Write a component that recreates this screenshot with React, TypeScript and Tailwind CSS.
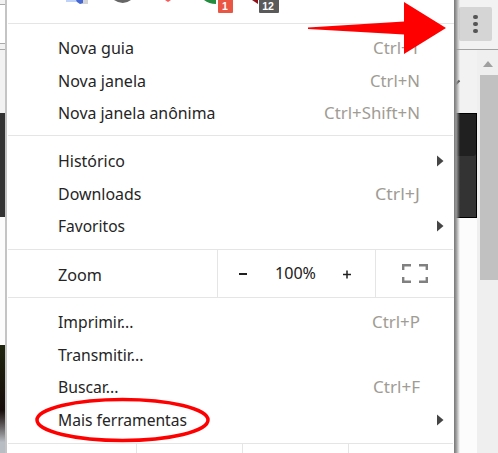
import React from "react";

type Item = { label: string; width: number; keys?: string; keysWidth?: number; sub?: boolean };

const windows: Item[] = [
  { label: "Nova guia", width: 76, keys: "Ctrl+T", keysWidth: 47 },
  { label: "Nova janela", width: 88, keys: "Ctrl+N", keysWidth: 50 },
  { label: "Nova janela anônima", width: 157.5, keys: "Ctrl+Shift+N", keysWidth: 96 },
];
const library: Item[] = [
  { label: "Histórico", width: 67, sub: true },
  { label: "Downloads", width: 83.5, keys: "Ctrl+J", keysWidth: 45 },
  { label: "Favoritos", width: 67, sub: true },
];
const tools: Item[] = [
  { label: "Imprimir...", width: 75.5, keys: "Ctrl+P", keysWidth: 48 },
  { label: "Transmitir...", width: 85.5 },
  { label: "Buscar...", width: 60.5, keys: "Ctrl+F", keysWidth: 47 },
  { label: "Mais ferramentas", width: 129, sub: true },
];

function Label({ text, width, className }: { text: string; width: number; className: string }) {
  return (
    <svg width={width} height="22" className="block overflow-visible">
      <text x="0" y="16.75" textLength={width} lengthAdjust="spacingAndGlyphs" className={className}>
        {text}
      </text>
    </svg>
  );
}

function Row({ item }: { item: Item }) {
  return (
    <div className="flex h-[32.5px] items-center justify-between pl-[51px] pr-[10px]">
      <Label text={item.label} width={item.width} className="fill-[#252525]" />
      {item.keys && (
        <div className="pr-[24px]">
          <Label text={item.keys} width={item.keysWidth ?? 48} className="fill-[#a09c94]" />
        </div>
      )}
      {item.sub && (
        <svg width="7" height="12" className="block">
          <path d="M0 .5 6.5 6 0 11.5Z" fill="#454545" />
        </svg>
      )}
    </div>
  );
}

function Group({ items, className }: { items: Item[]; className: string }) {
  return (
    <div className={`ml-px mr-[2px] border-b border-[#e5e5e5] ${className}`}>
      <div className="-ml-px -mr-px">
        {items.map((item) => (
          <Row key={item.label} item={item} />
        ))}
      </div>
    </div>
  );
}

export default function App() {
  return (
    <div className="relative flex h-[453px] w-[498px] overflow-hidden bg-[#fcfcfc] font-['Noto_Sans','Open_Sans',sans-serif] text-[16px]">
      <div className="flex w-[5px] shrink-0 flex-col">
        <div className="h-[4px] bg-[#f2f2f2]" />
        <div className="h-[40px] border-y border-[#aaa] bg-white" />
        <div className="h-[5px] bg-[#f2f2f2]" />
        <div className="h-[64px] border-t border-[#aaa] bg-[#f2f2f2]" />
        <div className="h-[104px] bg-[#333]" />
        <div className="h-[128px] bg-[#fcfcfc]" />
        <div className="h-[108px] bg-linear-to-b from-[#20260f] via-[#160c0a] via-60% to-[#b8bdc3] to-90%" />
      </div>

      <div className="flex w-[450px] shrink-0 flex-col border-l-2 border-[#c4c4c4] bg-white">
        <div className="mx-px h-[24px] border-b border-[#e5e5e5]">
          <svg width="445" height="23" viewBox="8 0 445 23" className="block">
            <path d="M66 0h13v2H66Z" fill="#bfd2fa" />
            <path d="M77 0h11v4H80Z" fill="#d4d4d6" />
            <path d="M76 0h7v3l-3 1-3-2Z" fill="#4568d2" />
            <path d="M114 0q9 6 17 0Z" fill="#666" />
            <path d="M165 0h6l-3 2Z" fill="#ff5555" />
            <path d="M204 0q5 4 12 4V0Z" fill="#238c3e" />
            <path d="M252 0h6v4Z" fill="#8d1118" />
            <rect x="218" y="-2" width="15" height="15" rx="1" fill="#ea5644" />
            <rect x="259" y="-2" width="20" height="15" rx="1" fill="#5a5a5a" />
            <text x="225" y="10" textAnchor="middle" className="fill-white font-['Liberation_Sans',sans-serif] text-[10.5px] font-bold">1</text>
            <text x="268" y="10" textAnchor="middle" className="fill-white font-['Liberation_Sans',sans-serif] text-[10.5px] font-bold">12</text>
          </svg>
        </div>
        <Group items={windows} className="h-[112px] pt-[8px]" />
        <Group items={library} className="h-[114px] pt-[9px]" />
        <div className="mx-px flex h-[48px] border-b border-[#e5e5e5]">
          <div className="flex w-[210px] items-center border-r border-[#e5e5e5] pl-[50px] pt-[3px]">
            <Label text="Zoom" width={44} className="fill-[#252525]" />
          </div>
          <div className="flex w-[158px] items-center border-r border-[#e5e5e5] pl-[21px]">
            <div className="mt-px h-[2px] w-[8px] bg-[#202020]" />
            <div className="pb-px pl-[28px] pr-[27px]">
              <Label text="100%" width={41} className="fill-[#202020]" />
            </div>
            <svg width="9" height="9" className="mt-px block">
              <path d="M0 4.5h8M4 .5v8" stroke="#202020" strokeWidth="1.5" />
            </svg>
          </div>
          <div className="flex flex-1 items-center pl-[26px]">
            <svg width="26" height="19" className="block">
              <path d="M1.200 6V1.200H9M17 1.200h7.800V6M24.800 13v4.800H17M9 17.800H1.200V13" fill="none" stroke="#808080" strokeWidth="2.400" />
            </svg>
          </div>
        </div>
        <Group items={tools} className="h-[146px] pt-[8px]" />
        <div className="mx-px flex h-[9px]">
          <div className="w-[129px] border-r border-[#e5e5e5]" />
          <div className="w-[106px] border-r border-[#e5e5e5]" />
          <div className="w-[106px] border-r border-[#e5e5e5]" />
        </div>
      </div>

      <div className="flex w-[43px] shrink-0 flex-col">
        <div className="flex h-[50px] items-start border-b border-[#a3a3a3] bg-[#f2f2f2] pl-[4px] pt-[7px]">
          <div className="flex h-[34px] w-[33px] flex-col items-center justify-center gap-[2.5px] rounded-[2px] bg-[#d5d5d5]">
            <div className="size-[4.5px] rounded-full bg-[#555]" />
            <div className="size-[4.5px] rounded-full bg-[#555]" />
            <div className="size-[4.5px] rounded-full bg-[#555]" />
          </div>
        </div>
        <div className="flex h-[403px]">
          <div className="flex w-[22px] flex-col">
            <div className="h-[63px] bg-[#f2f2f2] pt-[29px]">
              <svg width="7" height="8" className="block">
                <path d="m0 6 4.500-4.500" stroke="#444" strokeWidth="2" />
              </svg>
            </div>
            <div className="h-[105px] border border-black bg-[#333]">
              <div className="h-[42px] rounded-br-[3px] bg-[#202020]" />
            </div>
          </div>
          <div className="flex flex-1 flex-col bg-[#efefef]">
            <div className="flex h-[25px] justify-center pl-px pt-[11px]">
              <svg width="10" height="6" className="block">
                <path d="M0 6 5 0l5 6Z" fill="#a0a0a0" />
              </svg>
            </div>
            <div className="ml-[3px] h-[205px] bg-[#c1c1c1]" />
          </div>
        </div>
      </div>

      <div className="absolute left-[454px] top-0 h-full w-[6px] bg-linear-to-r from-[#777] via-[#999] via-35% to-transparent" />
      <svg width="498" height="453" className="absolute left-0 top-0">
        <path d="M308 27.5 404 21.5V2L446 28 404 54V34.5L308 29Z" fill="#f00" />
        <ellipse cx="122.5" cy="420" rx="85.500" ry="20.500" fill="none" stroke="#f00" strokeWidth="3.500" />
      </svg>
    </div>
  );
}
